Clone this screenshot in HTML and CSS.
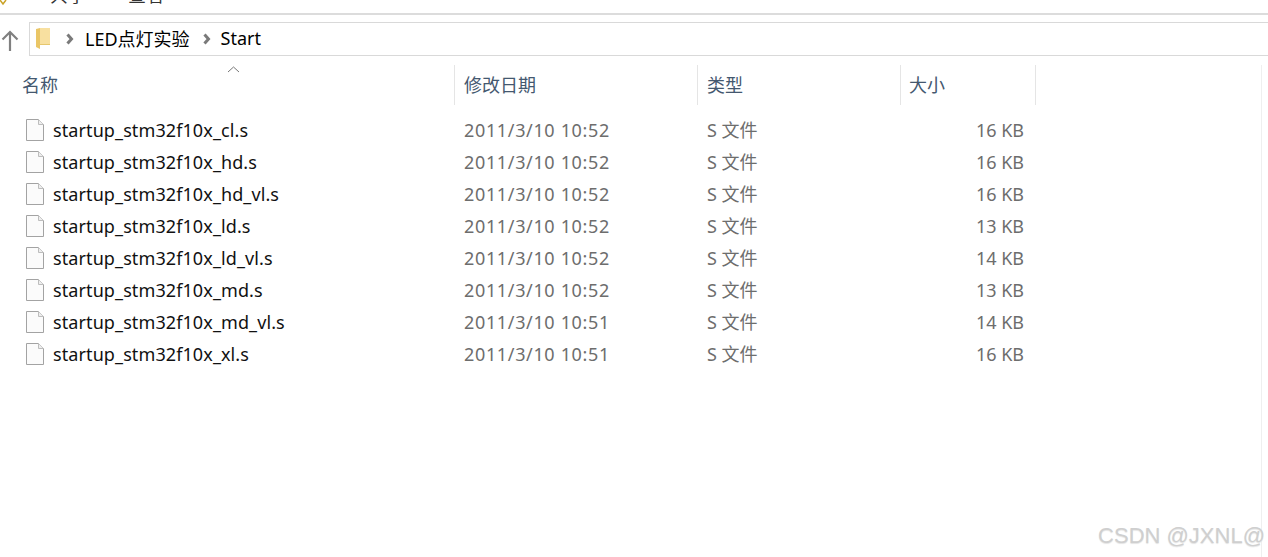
FILE: index.html
```html
<!DOCTYPE html>
<html lang="zh-CN">
<head>
    <meta charset="UTF-8">
    <title>Start</title>
    <link rel="stylesheet" href="styles.css">
</head>
<body>
    <div class="ribbon">
        <svg class="ribbon-icon" width="8" height="6" viewBox="0 0 8 6"><path d="M0 0l3 4 3-4" fill="none" stroke="#c9a227" stroke-width="1.5"/></svg>
        <span class="tab tab-share">共享</span>
        <span class="tab tab-view">查看</span>
    </div>

    <div class="nav">
        <svg class="up-arrow" width="18" height="22" viewBox="0 0 18 22">
            <path d="M9 21V2M1.500 9.500L9 2l7.500 7.500" fill="none" stroke="#808080" stroke-width="2.200"/>
        </svg>
        <div class="address">
            <svg class="folder" width="14" height="22" viewBox="0 0 14 22">
                <path d="M4 0h10v17H4z" fill="#f8e0a0"/>
                <path d="M0 1l4-1v21l-4-2z" fill="#eac666"/>
                <path d="M4 16h10v1H4z" fill="#e6c76e"/>
            </svg>
            <svg class="chevron chevron-first" width="8" height="12" viewBox="0 0 8 12"><path d="M1.500 1.500l4 4.500-4 4.500" fill="none" stroke="#7a7a7a" stroke-width="3"/></svg>
            <span class="crumb">LED点灯实验</span>
            <svg class="chevron" width="8" height="12" viewBox="0 0 8 12"><path d="M1.500 1.500l4 4.500-4 4.500" fill="none" stroke="#7a7a7a" stroke-width="3"/></svg>
            <span class="crumb">Start</span>
        </div>
    </div>

    <div class="content">
        <div class="file-list">
            <div class="row head">
                <div class="col col-name">名称
                    <svg class="sort-caret" width="13" height="7" viewBox="0 0 13 7"><path d="M1 6l5.500-5 5.500 5" fill="none" stroke="#777" stroke-width="1"/></svg>
                </div>
                <div class="col col-date">修改日期</div>
                <div class="col col-type">类型</div>
                <div class="col col-size">大小</div>
            </div>

            <div class="row item">
                <div class="col col-name"><svg class="file-icon" viewBox="0 0 18 22"><path d="M.5.500h12l5 5v16H.5z" fill="#fbfbfb" stroke="#a3a3a3"/><path d="M12.500.500v5h5" fill="#eee" stroke="#bdbdbd"/></svg><span>startup_stm32f10x_cl.s</span></div>
                <div class="col col-date">2011/3/10 10:52</div>
                <div class="col col-type">S 文件</div>
                <div class="col col-size">16 KB</div>
            </div>
            <div class="row item">
                <div class="col col-name"><svg class="file-icon" viewBox="0 0 18 22"><path d="M.5.500h12l5 5v16H.5z" fill="#fbfbfb" stroke="#a3a3a3"/><path d="M12.500.500v5h5" fill="#eee" stroke="#bdbdbd"/></svg><span>startup_stm32f10x_hd.s</span></div>
                <div class="col col-date">2011/3/10 10:52</div>
                <div class="col col-type">S 文件</div>
                <div class="col col-size">16 KB</div>
            </div>
            <div class="row item">
                <div class="col col-name"><svg class="file-icon" viewBox="0 0 18 22"><path d="M.5.500h12l5 5v16H.5z" fill="#fbfbfb" stroke="#a3a3a3"/><path d="M12.500.500v5h5" fill="#eee" stroke="#bdbdbd"/></svg><span>startup_stm32f10x_hd_vl.s</span></div>
                <div class="col col-date">2011/3/10 10:52</div>
                <div class="col col-type">S 文件</div>
                <div class="col col-size">16 KB</div>
            </div>
            <div class="row item">
                <div class="col col-name"><svg class="file-icon" viewBox="0 0 18 22"><path d="M.5.500h12l5 5v16H.5z" fill="#fbfbfb" stroke="#a3a3a3"/><path d="M12.500.500v5h5" fill="#eee" stroke="#bdbdbd"/></svg><span>startup_stm32f10x_ld.s</span></div>
                <div class="col col-date">2011/3/10 10:52</div>
                <div class="col col-type">S 文件</div>
                <div class="col col-size">13 KB</div>
            </div>
            <div class="row item">
                <div class="col col-name"><svg class="file-icon" viewBox="0 0 18 22"><path d="M.5.500h12l5 5v16H.5z" fill="#fbfbfb" stroke="#a3a3a3"/><path d="M12.500.500v5h5" fill="#eee" stroke="#bdbdbd"/></svg><span>startup_stm32f10x_ld_vl.s</span></div>
                <div class="col col-date">2011/3/10 10:52</div>
                <div class="col col-type">S 文件</div>
                <div class="col col-size">14 KB</div>
            </div>
            <div class="row item">
                <div class="col col-name"><svg class="file-icon" viewBox="0 0 18 22"><path d="M.5.500h12l5 5v16H.5z" fill="#fbfbfb" stroke="#a3a3a3"/><path d="M12.500.500v5h5" fill="#eee" stroke="#bdbdbd"/></svg><span>startup_stm32f10x_md.s</span></div>
                <div class="col col-date">2011/3/10 10:52</div>
                <div class="col col-type">S 文件</div>
                <div class="col col-size">13 KB</div>
            </div>
            <div class="row item">
                <div class="col col-name"><svg class="file-icon" viewBox="0 0 18 22"><path d="M.5.500h12l5 5v16H.5z" fill="#fbfbfb" stroke="#a3a3a3"/><path d="M12.500.500v5h5" fill="#eee" stroke="#bdbdbd"/></svg><span>startup_stm32f10x_md_vl.s</span></div>
                <div class="col col-date">2011/3/10 10:51</div>
                <div class="col col-type">S 文件</div>
                <div class="col col-size">14 KB</div>
            </div>
            <div class="row item">
                <div class="col col-name"><svg class="file-icon" viewBox="0 0 18 22"><path d="M.5.500h12l5 5v16H.5z" fill="#fbfbfb" stroke="#a3a3a3"/><path d="M12.500.500v5h5" fill="#eee" stroke="#bdbdbd"/></svg><span>startup_stm32f10x_xl.s</span></div>
                <div class="col col-date">2011/3/10 10:51</div>
                <div class="col col-type">S 文件</div>
                <div class="col col-size">16 KB</div>
            </div>
        </div>
        <div class="scroll-edge"></div>
    </div>

    <div class="watermark">CSDN @JXNL@</div>
</body>
</html>
```

FILE: styles.css
```css
html, body {
    height: 100%;
    margin: 0;
}
body {
    width: 1268px;
    height: 557px;
    overflow: hidden;
    position: relative;
    display: flex;
    flex-direction: column;
    background: #fff;
    color: #1a1a1a;
    font-family: "Noto Sans", "Noto Sans CJK SC", sans-serif;
    font-size: 18px;
}
.ribbon {
    height: 13px;
    border-bottom: 2px solid #dcdcdc;
    position: relative;
    overflow: hidden;
    flex: none;
}
.ribbon-icon {
    position: absolute;
    left: 0;
    top: 0;
}
.tab {
    position: absolute;
    top: -17px;
    font-size: 18px;
    line-height: 24px;
    color: #333;
}
.tab-share {
    left: 50px;
}
.tab-view {
    left: 128px;
}
.nav {
    display: flex;
    align-items: center;
    height: 34px;
    margin-top: 7px;
    flex: none;
}
.up-arrow {
    margin: 3px 9px 0 1px;
    flex: none;
}
.address {
    flex: 1;
    height: 34px;
    box-sizing: border-box;
    border: 1px solid #d9d9d9;
    border-right: none;
    display: flex;
    align-items: center;
    padding: 0 0 3px 6px;
    margin-left: 1px;
}
.folder {
    margin: 2px 16px 0 0;
}
.chevron {
    margin: 2px 10px 0 0;
}
.chevron-first {
    margin-right: 11px;
}
.crumb {
    font-size: 18px;
    color: #000;
    margin-right: 13px;
}
.content {
    flex: 1;
    display: flex;
    padding-top: 9px;
}
.file-list {
    width: 1261px;
}
.scroll-edge {
    width: 1px;
    background: #efefef;
}
.row {
    display: flex;
    height: 32px;
    align-items: center;
}
.row.head {
    height: 40px;
    margin-bottom: 9px;
    color: #44586f;
}
.col {
    box-sizing: border-box;
    white-space: nowrap;
}
.col-name {
    width: 454px;
    padding-left: 22px;
    position: relative;
}
.col-date {
    width: 243px;
    padding-left: 10px;
}
.col-type {
    width: 203px;
    padding-left: 10px;
}
.col-size {
    width: 135px;
    padding-left: 9px;
}
.head .col {
    height: 40px;
    line-height: 41px;
    border-right: 1px solid #e5e5e5;
}
.head .col-name {
    width: 455px;
}
.head .col-date {
    padding-left: 9px;
}
.head .col-type {
    padding-left: 9px;
}
.head .col-size {
    padding-left: 8px;
}
.sort-caret {
    position: absolute;
    left: 227px;
    top: 1px;
}
.item {
    color: #6d6d6d;
    line-height: 24px;
}
.item .col-name {
    color: #111;
    padding-left: 26px;
    display: flex;
    align-items: center;
    letter-spacing: .1px;
}
.item .col-date {
    letter-spacing: .65px;
}
.item .col-size {
    padding: 0 11px 0 0;
    text-align: right;
}
.file-icon {
    width: 18px;
    height: 22px;
    margin-right: 9px;
    flex: none;
}
.watermark {
    position: absolute;
    right: 3px;
    bottom: 8px;
    font-family: "Liberation Sans", sans-serif;
    font-size: 22px;
    color: #cfcfcf;
    text-shadow: 0 1px 1px #e4e4e4;
}
```
